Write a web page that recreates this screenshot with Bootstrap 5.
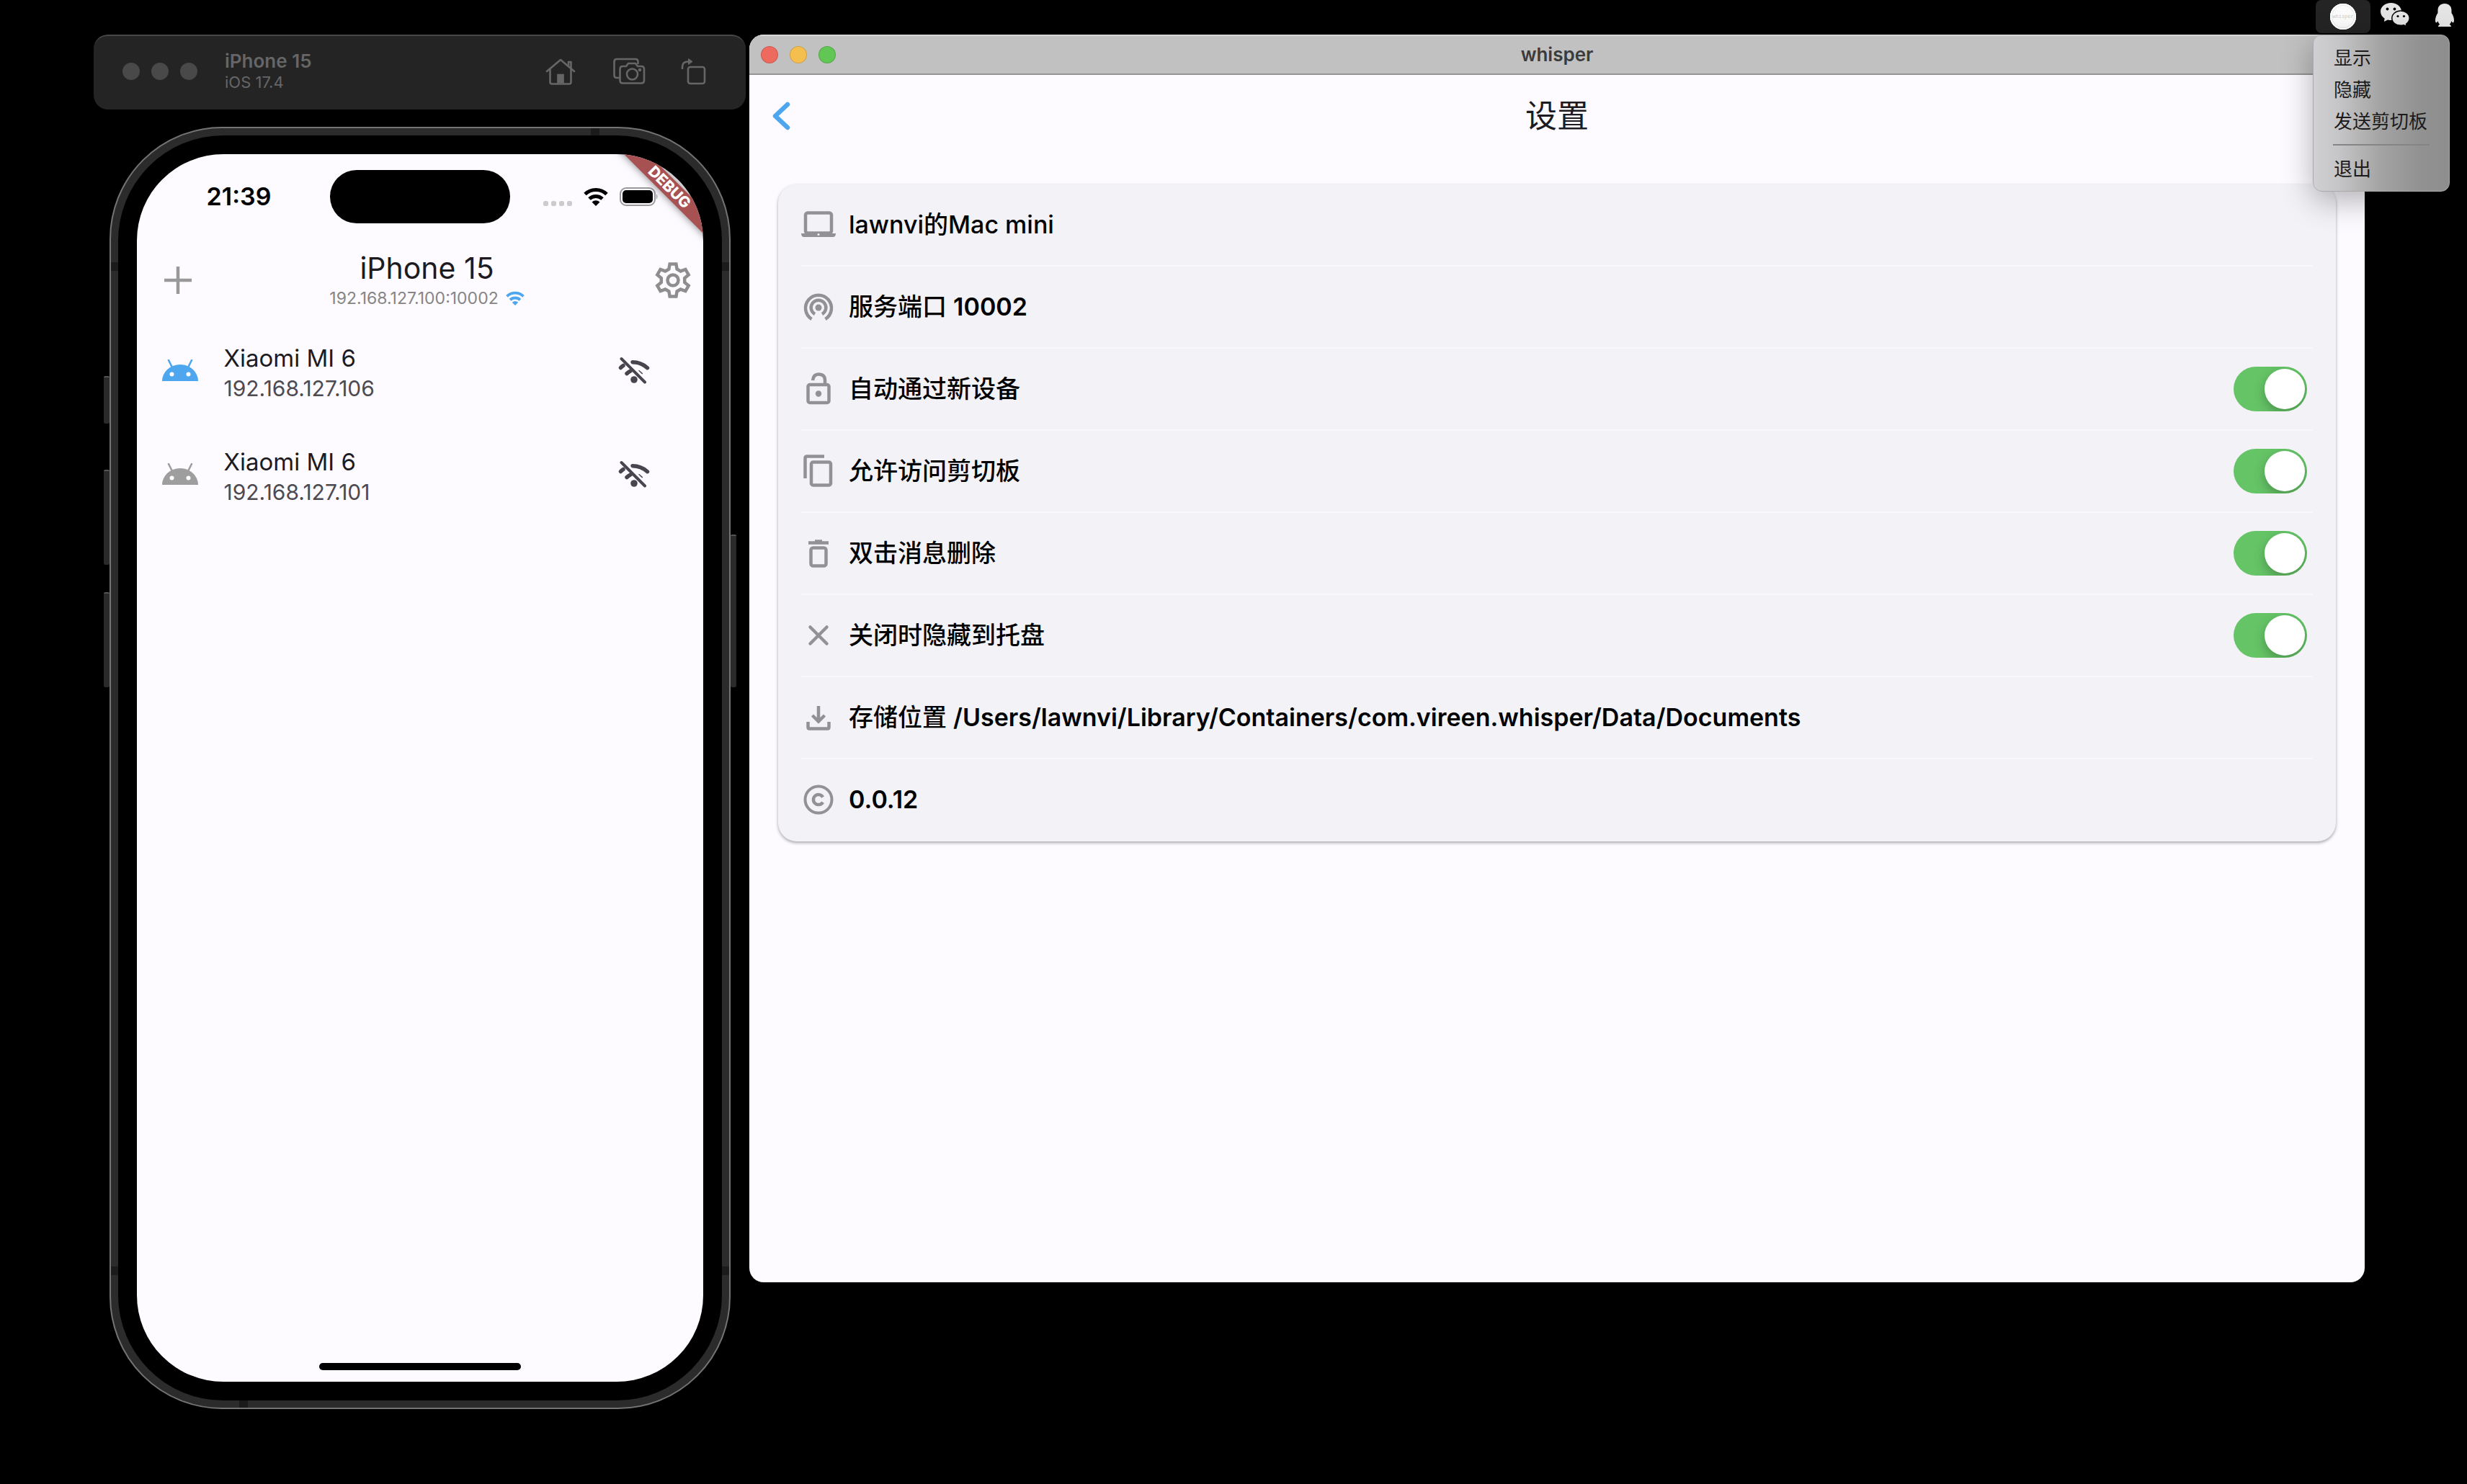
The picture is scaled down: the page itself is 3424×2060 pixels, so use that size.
<!DOCTYPE html>
<html lang="zh-CN">
<head>
<meta charset="utf-8">
<meta name="viewport" content="width=device-width, initial-scale=1">
<title>whisper</title>
<link href="https://cdn.jsdelivr.net/npm/bootstrap@5.3.0/dist/css/bootstrap.min.css" rel="stylesheet">
<style>
:root { --ui: Inter, "Noto Sans CJK SC", sans-serif; --blue: #4da6ee; --grey: #919196; }
body { background: #000; font-family: var(--ui); line-height: 1.25; }
svg { display: block; flex: none; }
button { background: none; border: 0; padding: 0; color: inherit; }
.tint-blue { color: var(--blue); }
.tint-idle { color: #9e9e9e; }
.tint-dark { color: #49454f; }

/* menu bar */
.menubar { height: 48px; padding-right: 14px; }
.tray-item { height: 46px; }
.tray-next { padding: 0 0 6px 14px; }
.tray-last { padding: 0 0 4px 32px; }
.tray-open { width: 76px; background: #242424; border-radius: 8px; position: relative; }
.tray-logo { width: 36px; height: 36px; border-radius: 50%; background: #fcfcfc; color: #ccc; font-family: "Liberation Mono", monospace; font-size: 7px; box-shadow: inset 0 0 0 2px #fff, inset 0 0 0 3px #e8ece6; }
.tray-menu { display: block; position: absolute; z-index: 10; top: 48px; left: -4px; width: 190px; min-width: 0; margin: 0; padding: 10px 0 8px; border: 1px solid #aaa; border-radius: 12px; background: linear-gradient(90deg, #d0cfd3 0, #c6c6c8 18%, #a3a3a3 50%, #919191 80%, #8e8e8e); box-shadow: 0 12px 44px rgba(0,0,0,.3); }
.tray-menu .dropdown-item { padding: 0 0 0 28px; height: 44px; font-size: 26px; line-height: 44px; color: #1b1b1b; }
.tray-menu .dropdown-divider { margin: 9px 27px 11px; border-top: 2px solid #858585; opacity: 1; }

.desktop { padding-left: 130px; padding-right: 142px; gap: 5px; }

/* simulator */
.simulator { flex: 0 0 905px; }
.sim-bar { height: 104px; background: #242424; border-top: 2px solid #484848; border-radius: 20px; padding: 0 54px 4px 40px; color: #666; }
.sim-dot { width: 24px; height: 24px; border-radius: 50%; background: #494949; }
.sim-label { padding-left: 38px; }
.sim-name { font-size: 26px; font-weight: 600; line-height: 30px; }
.sim-os { font-size: 22px; line-height: 28px; }
.sim-tools { gap: 46px; }
.device { position: relative; width: 862px; aspect-ratio: 862 / 1780; margin: 24px auto 0; padding: 10px; background: #2b2b2b; border: 2px solid #747474; border-radius: 156px; }
.bezel { height: 100%; background: #000; border-radius: 146px; padding: 26px; }
.screen { position: relative; height: 100%; background: #fdfbff; border-radius: 120px; overflow: hidden; }
.side-key { position: absolute; width: 8px; background: #2a2a2a; border-top: 2px solid #555; border-radius: 2px; }
.key-a { left: -10px; top: 344px; height: 66px; }
.key-b { left: -10px; top: 474px; height: 132px; }
.key-c { left: -10px; top: 644px; height: 132px; }
.key-d { right: -10px; top: 564px; height: 212px; }
.antenna { position: absolute; background: #1b1b1b; }
.ant-side { width: 10px; height: 12px; }
.ant-end { width: 12px; height: 10px; }
.ant-top { top: 186px; } .ant-low { top: 1580px; }
.ant-l { left: 0; } .ant-r { right: 0; }
.ant-n { top: 0; left: 666px; } .ant-s { bottom: 0; left: 178px; }
.status { height: 118px; }
.status-time { font-size: 34px; font-weight: 600; color: #000; }
.signal { margin-left: 46px; }
.island { width: 250px; height: 74px; border-radius: 37px; background: #000; margin-top: 22px; }
.ribbon { position: absolute; right: -73px; top: 34px; width: 240px; height: 24px; line-height: 24px; text-align: center; transform: rotate(45deg); background: #a75152; color: #fff; font-size: 21px; font-weight: 800; box-shadow: 0 0 12px rgba(0,0,0,.5); }
.app-head { height: 114px; padding: 0 17px 0 37px; }
.app-title { font-size: 41px; line-height: 50px; margin: 0; font-weight: 400; color: #1c1b1f; }
.app-ip { font-size: 23px; line-height: 34px; color: #858585; gap: 10px; }
.peer { height: 144px; padding: 0 74px 8px 34px; }
.peer-text { padding: 8px 0 0 35px; }
.peer-name { font-size: 33px; line-height: 42px; color: #1c1b1f; }
.peer-ip { font-size: 30px; line-height: 42px; color: #4d4a52; }
.home-bar { position: absolute; left: 50%; bottom: 16px; width: 280px; height: 10px; margin-left: -140px; border-radius: 5px; background: #000; }

/* desktop window */
.mac-window { min-height: calc(100vh - 328px); background: #fdfbff; border-radius: 20px; overflow: hidden; }
.title-bar { position: relative; height: 56px; background: #c1c1c1; border-top: 2px solid #d8d8d8; border-bottom: 2px solid #949494; padding: 0 16px; }
.light { width: 24px; height: 24px; border-radius: 50%; border: 1px solid rgba(0,0,0,.15); }
.light-close { background: #ee6a5f; } .light-min { background: #f5bf4f; } .light-max { background: #61c654; }
.window-name { font-size: 26px; font-weight: 600; color: #3b3b3b; }
.third { flex: 1 1 0; }
.page-head { height: 114px; padding: 0 31px; }
.page-title { font-size: 44px; font-weight: 400; margin: 0; color: #1c1b1f; }
.settings { margin: 38px 40px 0; background: #f2f2f7; border-radius: 26px; padding: 0 32px; box-shadow: 0 2px 4px rgba(0,0,0,.35); }
.setting { height: 114px; border-bottom: 2px solid #f8f8fc; gap: 18px; font-size: 34px; font-weight: 500; color: #000; padding-right: 8px; }
.setting:last-child { border-bottom-color: transparent; }
.setting svg { color: var(--grey); }
.latin { font-weight: 600; }
.form-check-input.toggle { width: 102px; height: 62px; margin: 0; border: 0; border-radius: 31px; background: #65c466; box-shadow: none; display: flex; align-items: center; justify-content: flex-end; padding: 3px; overflow: hidden; }
.toggle::before { content: ""; width: 56px; height: 56px; border-radius: 50%; background: #fff; box-shadow: 0 6px 16px rgba(0,0,0,.25); }
.toggle:not(:checked) { justify-content: flex-start; background: #d8d8dc; }
</style>
</head>
<body>
<svg width="0" height="0" class="position-absolute" aria-hidden="true">
  <defs>
    <symbol id="android" viewBox="0 0 50 30"><path fill="currentColor" d="M0 30a25 23 0 0 1 50 0z"/><path stroke="currentColor" stroke-width="2.6" stroke-linecap="round" d="M9 1l5 10M41 1l-5 10"/><circle cx="13.500" cy="20.500" r="3" fill="#fdfbff"/><circle cx="36.500" cy="20.500" r="3" fill="#fdfbff"/></symbol>
    <symbol id="wifi" viewBox="0 0 34 26"><g fill="none" stroke="currentColor" stroke-width="5"><path d="M2 9.500a21.500 21.500 0 0 1 30 0"/><path d="M8 16a13 13 0 0 1 18 0"/></g><path fill="currentColor" d="M17 26l-5.500-5.500a8 8 0 0 1 11 0z"/></symbol>
    <symbol id="wifi-off" viewBox="0 0 44 38"><g fill="none" stroke="currentColor" stroke-width="5.500" stroke-linecap="round"><path d="M3.500 15.500q1.500-1.700 3.500-3M20 7.800q11.500 0 20.500 7.900M12 23.500q2.500-2.500 5-3.600"/><path d="M29 20l4 3.500" stroke-width="2"/></g><circle cx="22" cy="32" r="4.800" fill="currentColor"/><path d="M6 -.5L44 37.500" stroke="#fdfbff" stroke-width="3"/><path d="M4.500 3L37 35.500" stroke="currentColor" stroke-width="4" stroke-linecap="round"/></symbol>
  </defs>
</svg>

<header class="menubar d-flex justify-content-end align-items-start">
  <div class="tray-open tray-item d-flex justify-content-center align-items-center">
    <button class="tray-logo d-flex justify-content-center align-items-center" type="button" aria-expanded="true">whisper</button>
    <ul class="dropdown-menu tray-menu">
      <li><button class="dropdown-item" type="button">显示</button></li>
      <li><button class="dropdown-item" type="button">隐藏</button></li>
      <li><button class="dropdown-item" type="button">发送剪切板</button></li>
      <li><hr class="dropdown-divider"></li>
      <li><button class="dropdown-item" type="button">退出</button></li>
    </ul>
  </div>
  <button class="tray-item tray-next d-flex align-items-center" type="button" aria-label="WeChat">
    <svg width="40" height="33" viewBox="0 0 40 33"><path fill="#e4e4e4" d="M14.500 0C6.500 0 0 5 0 12c0 4 2.200 7.300 5.600 9.500L5 26l5-2.600q2.200.6 4.500.6C22.500 24 29 19 29 12S22.500 0 14.500 0z"/><path fill="#e4e4e4" stroke="#000" stroke-width="1.500" d="M28 11c6.800 0 12.200 4.400 12.200 10.300 0 3.300-1.700 6-4.600 8l.7 3.400-4-2q-2 .6-4.300.6c-6.800 0-12.200-4.200-12.200-10S21.200 11 28 11z"/><g><circle cx="9.500" cy="8.500" r="1.900"/><circle cx="19.500" cy="8.500" r="1.900"/><circle cx="24" cy="18.500" r="1.600"/><circle cx="32.500" cy="18.500" r="1.600"/></g></svg>
  </button>
  <button class="tray-item tray-last d-flex align-items-center" type="button" aria-label="QQ">
    <svg width="34" height="34" viewBox="0 0 34 34"><path fill="#e4e4e4" d="M17 1c-6 0-9.500 4-9.500 9v4C5.500 17 4 20.500 4 24c0 2 .6 3.500 1.400 3.500.7 0 1.600-1 2.200-2.200.4 1.700 1.300 3.300 2.600 4.600-1.300.6-2.200 1.500-2.200 3.100h18c0-1.600-.9-2.500-2.200-3.100 1.300-1.300 2.200-2.900 2.600-4.600.6 1.200 1.500 2.200 2.200 2.200.8 0 1.400-1.500 1.400-3.500 0-3.500-1.500-7-3.500-10v-4c0-5-3.500-9-9.500-9z"/></svg>
  </button>
</header>

<main class="desktop d-flex align-items-start">
  <section class="simulator">
    <div class="sim-bar d-flex align-items-center">
      <div class="d-flex gap-3"><span class="sim-dot"></span><span class="sim-dot"></span><span class="sim-dot"></span></div>
      <div class="sim-label flex-grow-1"><div class="sim-name">iPhone 15</div><div class="sim-os">iOS 17.4</div></div>
      <div class="sim-tools d-flex align-items-center">
        <button type="button" aria-label="Home"><svg width="42" height="38" viewBox="0 0 42 38" fill="none" stroke="currentColor" stroke-width="2.600"><path stroke-linecap="round" stroke-linejoin="round" d="M2 19L21 3l19 16M6.500 16v18q0 2.500 2.500 2.500h24q2.500 0 2.500-2.500V16M32 11V6h3.500v9"/><path fill="currentColor" d="M17.500 35.500V24h7v11.500"/></svg></button>
        <button type="button" aria-label="Screenshot"><svg width="54" height="38" viewBox="-6 0 54 38" fill="none" stroke="currentColor" stroke-width="2.600"><path d="M9 28H5q-3.500 0-3.500-3.500V5.500Q1.500 2 5 2h26q3.500 0 3.500 4v3"/><path stroke-linejoin="round" d="M13.500 12H18l3-4h10l3 4h5q4 0 4 4v15.500q0 4-4 4H13.500q-4 0-4-4V16q0-4 4-4z"/><circle cx="26.500" cy="23" r="7.500"/><circle cx="37" cy="17" r="1" fill="currentColor"/></svg></button>
        <button type="button" aria-label="Rotate"><svg width="36" height="40" viewBox="0 0 36 40" fill="none" stroke="currentColor" stroke-width="2.600"><rect x="10" y="14" width="23" height="23" rx="3"/><path d="M2 17v-3q0-7.500 8-7.500h2"/><path fill="currentColor" d="M10.500 2.500l5.500 4-5.500 4z" stroke-width="1"/></svg></button>
      </div>
    </div>

    <div class="device">
      <span class="side-key key-a"></span><span class="side-key key-b"></span><span class="side-key key-c"></span><span class="side-key key-d"></span>
      <span class="antenna ant-side ant-top ant-l"></span><span class="antenna ant-side ant-top ant-r"></span>
      <span class="antenna ant-side ant-low ant-l"></span><span class="antenna ant-side ant-low ant-r"></span>
      <span class="antenna ant-end ant-n"></span><span class="antenna ant-end ant-s"></span>
      <div class="bezel">
        <div class="screen">
          <div class="status d-flex align-items-center">
            <div class="third d-flex justify-content-center"><span class="status-time ps-3">21:39</span></div>
            <div class="island align-self-start"></div>
            <div class="third d-flex align-items-center">
              <svg class="signal" width="40" height="26" viewBox="0 0 40 26" fill="#ccc"><rect y="19" width="7" height="7" rx="2.500"/><rect x="11" y="19" width="7" height="7" rx="2.500"/><rect x="22" y="19" width="7" height="7" rx="2.500"/><rect x="33" y="19" width="7" height="7" rx="2.500"/></svg>
              <svg class="text-black ms-3" width="34" height="26"><use href="#wifi"/></svg>
              <svg class="ms-3" width="54" height="26" viewBox="0 0 54 26"><rect x="1" y="1" width="48" height="24" rx="8" fill="none" stroke="#999" stroke-width="2"/><rect x="4" y="4" width="42" height="18" rx="5"/><path fill="#999" d="M51 9q3 4 0 8z"/></svg>
            </div>
          </div>
          <span class="ribbon">DEBUG</span>
          <div class="app-head d-flex align-items-center">
            <div class="third"><button class="d-block" type="button" aria-label="Add"><svg width="40" height="40" viewBox="0 0 40 40" stroke="#999" stroke-width="4.500"><path d="M1 20h38M20 1v38"/></svg></button></div>
            <div class="text-center">
              <h1 class="app-title">iPhone 15</h1>
              <div class="app-ip d-flex align-items-center">192.168.127.100:10002 <svg class="tint-blue" width="26" height="20"><use href="#wifi"/></svg></div>
            </div>
            <div class="third d-flex justify-content-end"><button type="button" aria-label="Settings"><svg width="50" height="52" viewBox="0 0 50 52" fill="none" stroke="#8e8e8e" stroke-width="4.500"><path d="M19.400 10.500L20.600 3.400H29.400L30.600 10.500L35.600 13.400L42.400 10.900L46.700 18.500L41.200 23.100V28.900L46.700 33.500L42.400 41.100L35.600 38.600L30.600 41.500L29.400 48.600H20.600L19.400 41.500L14.400 38.600L7.600 41.100L3.300 33.500L8.800 28.900V23.100L3.300 18.500L7.600 10.900L14.400 13.400z"/><circle cx="25" cy="26" r="7.500"/></svg></button></div>
          </div>
          <div class="peer d-flex align-items-center">
            <svg class="tint-blue" width="52" height="30"><use href="#android"/></svg>
            <div class="peer-text flex-grow-1"><div class="peer-name">Xiaomi MI 6</div><div class="peer-ip">192.168.127.106</div></div>
            <svg class="tint-dark" width="44" height="38"><use href="#wifi-off"/></svg>
          </div>
          <div class="peer d-flex align-items-center">
            <svg class="tint-idle" width="52" height="30"><use href="#android"/></svg>
            <div class="peer-text flex-grow-1"><div class="peer-name">Xiaomi MI 6</div><div class="peer-ip">192.168.127.101</div></div>
            <svg class="tint-dark" width="44" height="38"><use href="#wifi-off"/></svg>
          </div>
          <span class="home-bar"></span>
        </div>
      </div>
    </div>
  </section>

  <section class="mac-window flex-grow-1">
    <div class="title-bar d-flex align-items-center">
      <div class="third d-flex gap-3"><span class="light light-close"></span><span class="light light-min"></span><span class="light light-max"></span></div>
      <div class="window-name">whisper</div>
      <div class="third"></div>
    </div>
    <div class="page-head d-flex align-items-center">
      <div class="third"><button class="d-block" type="button" aria-label="返回"><svg width="26" height="40" viewBox="0 0 26 40" fill="none" stroke="#4da6ee" stroke-width="6.500" stroke-linecap="round" stroke-linejoin="round"><path d="M22 4L5 20l17 16"/></svg></button></div>
      <h2 class="page-title">设置</h2>
      <div class="third"></div>
    </div>
    <div class="settings">
      <div class="setting d-flex align-items-center">
        <svg width="48" height="48" viewBox="0 0 48 48" fill="none" stroke="currentColor"><rect x="6" y="7.500" width="36" height="28" rx="3" stroke-width="4.500"/><path fill="currentColor" stroke="none" d="M0 36h48q0 5-4 5H4q-4 0-4-5z"/><circle cx="24" cy="37.500" r="1.500" fill="#f2f2f7" stroke="none"/></svg>
        <span>lawnvi的Mac mini</span>
      </div>
      <div class="setting d-flex align-items-center">
        <svg width="48" height="48" viewBox="0 0 48 48" fill="none" stroke="currentColor" stroke-width="4.500"><path d="M14.500 41a18 18 0 1 1 19 0"/><path d="M19 34a10.300 10.300 0 1 1 10 0"/><circle cx="24" cy="25" r="4.500" fill="currentColor" stroke="none"/></svg>
        <span>服务端口 <span class="latin">10002</span></span>
      </div>
      <div class="setting d-flex align-items-center">
        <svg width="48" height="48" viewBox="0 0 48 48" fill="none" stroke="currentColor" stroke-width="4.500"><rect x="9.500" y="18" width="29" height="25" rx="2.500"/><path d="M16 12q1-8.500 8-8.500 9 0 9 8.500v6"/><circle cx="24" cy="30.500" r="4.200" fill="currentColor" stroke="none"/></svg>
        <label class="flex-grow-1" for="auto">自动通过新设备</label><input class="form-check-input toggle" type="checkbox" role="switch" id="auto" checked>
      </div>
      <div class="setting d-flex align-items-center">
        <svg width="48" height="48" viewBox="0 0 48 48" fill="none" stroke="currentColor" stroke-width="4.500"><rect x="14" y="11.500" width="27" height="32" rx="2.500"/><path d="M32 3.500H8q-2.500 0-2.500 2.500v28"/></svg>
        <label class="flex-grow-1" for="clip">允许访问剪切板</label><input class="form-check-input toggle" type="checkbox" role="switch" id="clip" checked>
      </div>
      <div class="setting d-flex align-items-center">
        <svg width="48" height="48" viewBox="0 0 48 48" fill="none" stroke="currentColor" stroke-width="4.500"><rect x="13.500" y="16.500" width="21" height="25" rx="3"/><path d="M10 9.500h28M19 7.500h10"/></svg>
        <label class="flex-grow-1" for="del">双击消息删除</label><input class="form-check-input toggle" type="checkbox" role="switch" id="del" checked>
      </div>
      <div class="setting d-flex align-items-center">
        <svg width="48" height="48" viewBox="0 0 48 48" fill="none" stroke="currentColor" stroke-width="4.500" stroke-linecap="round"><path d="M12.500 12.500l23 23M35.500 12.500l-23 23"/></svg>
        <label class="flex-grow-1" for="tray">关闭时隐藏到托盘</label><input class="form-check-input toggle" type="checkbox" role="switch" id="tray" checked>
      </div>
      <div class="setting d-flex align-items-center">
        <svg width="48" height="48" viewBox="0 0 48 48" fill="none" stroke="currentColor" stroke-width="4.500"><path d="M9.500 30v7.500q0 2 2 2h25q2 0 2-2V30M24 8v20M15.500 21l8.500 8.500 8.500-8.500"/></svg>
        <span>存储位置 <span class="latin">/Users/lawnvi/Library/Containers/com.vireen.whisper/Data/Documents</span></span>
      </div>
      <div class="setting d-flex align-items-center">
        <svg width="48" height="48" viewBox="0 0 48 48" fill="none" stroke="currentColor" stroke-width="4"><circle cx="24" cy="24" r="18.500"/><path stroke-width="4.500" d="M30 20.500a7 7 0 1 0 0 7"/></svg>
        <span class="latin">0.0.12</span>
      </div>
    </div>
  </section>
</main>
<script src="https://cdn.jsdelivr.net/npm/bootstrap@5.3.0/dist/js/bootstrap.bundle.min.js"></script>
</body>
</html>
